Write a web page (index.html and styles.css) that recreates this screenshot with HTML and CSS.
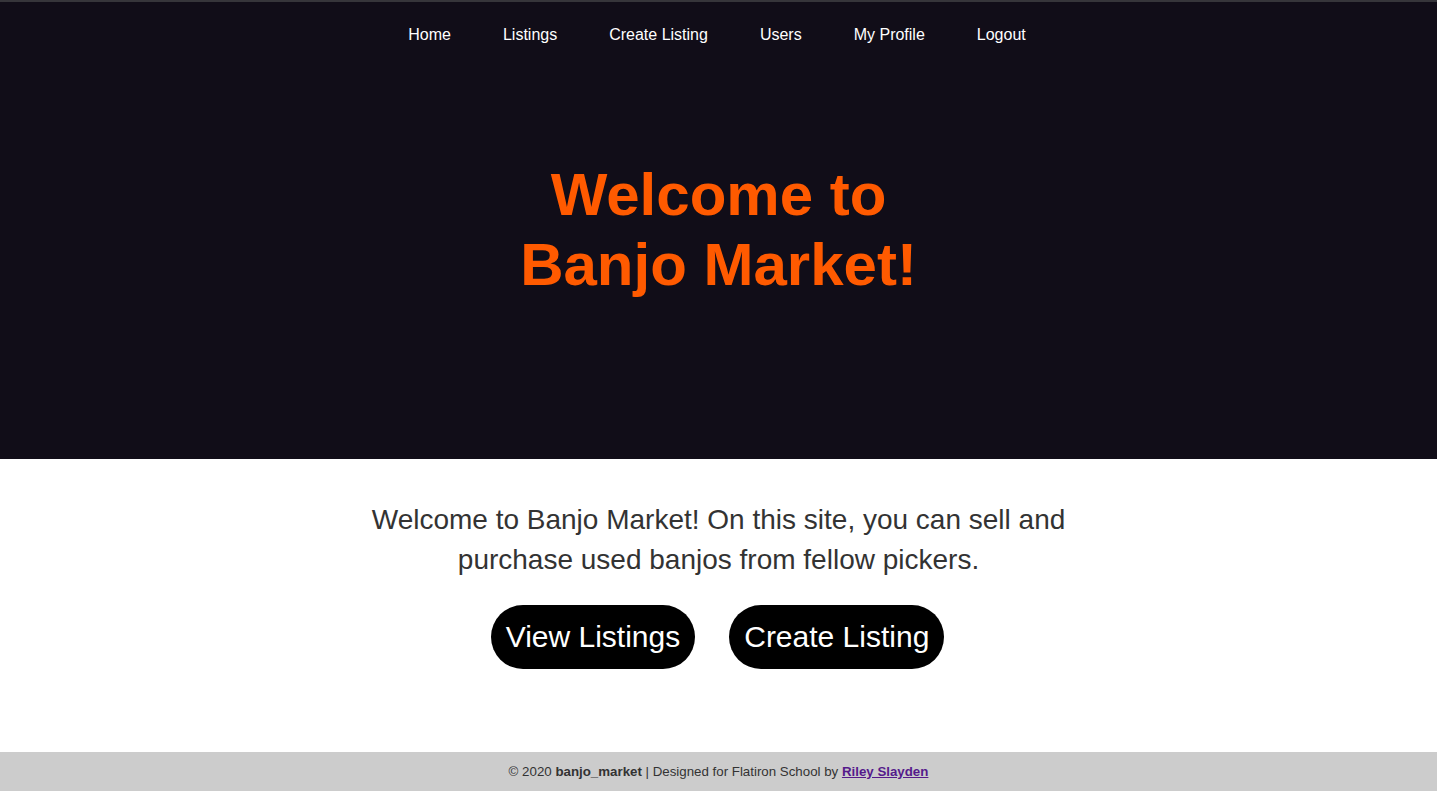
FILE: index.html
```html
<!DOCTYPE html>
<html>
<head>
<meta charset="utf-8">
<link rel="stylesheet" href="styles.css">
</head>
<body>
<header class="hero">
  <nav class="nav">
    <a href="#">Home</a>
    <a href="#">Listings</a>
    <a href="#">Create Listing</a>
    <a href="#">Users</a>
    <a href="#">My Profile</a>
    <a href="#">Logout</a>
  </nav>
  <h1 class="hero-title">Welcome to Banjo Market!</h1>
</header>
<main class="intro">
  <p class="intro-text">Welcome to Banjo Market! On this site, you can sell and purchase used banjos from fellow pickers.</p>
  <div class="actions">
    <a class="btn" href="#">View Listings</a>
    <a class="btn" href="#">Create Listing</a>
  </div>
</main>
<footer class="footer">© 2020 <strong>banjo_market</strong> | Designed for Flatiron School by <a href="#">Riley Slayden</a></footer>
</body>
</html>
```
FILE: styles.css
```css
html, body {
  margin: 0;
  padding: 0;
}
body {
  font-family: "Liberation Sans", Arial, Helvetica, sans-serif;
  background: #ffffff;
  height: 791px;
  display: flex;
  flex-direction: column;
}
.hero {
  background: #110d18;
  border-top: 2px solid #36353a;
  height: 457px;
  display: flex;
  flex-direction: column;
  align-items: center;
}
.nav {
  display: flex;
  justify-content: center;
  padding-top: 24px;
  padding-right: 3px;
}
.nav a {
  color: #ffffff;
  text-decoration: none;
  font-size: 16px;
  line-height: 18px;
  padding: 0 26px;
}
.hero-title {
  margin: 116px 0 0;
  width: 420px;
  text-align: center;
  color: #ff5a00;
  font-size: 60px;
  line-height: 70px;
  font-weight: bold;
}
.intro {
  flex: 1;
  display: flex;
  flex-direction: column;
  align-items: center;
}
.intro-text {
  margin: 41px 0 0;
  width: 740px;
  text-align: center;
  color: #333333;
  font-size: 28px;
  line-height: 40px;
}
.actions {
  display: flex;
  gap: 34px;
  margin-top: 25px;
  padding-right: 2px;
}
.btn {
  display: flex;
  align-items: center;
  justify-content: center;
  background: #000000;
  color: #ffffff;
  text-decoration: none;
  font-size: 30px;
  height: 64px;
  padding: 0 15px;
  border-radius: 32px;
}
.footer {
  background: #cccccc;
  height: 39px;
  line-height: 39px;
  text-align: center;
  font-size: 13.3px;
  color: #333333;
}
.footer strong {
  font-weight: bold;
}
.footer a {
  color: #551a8b;
  font-weight: bold;
  text-decoration: underline;
}
```
